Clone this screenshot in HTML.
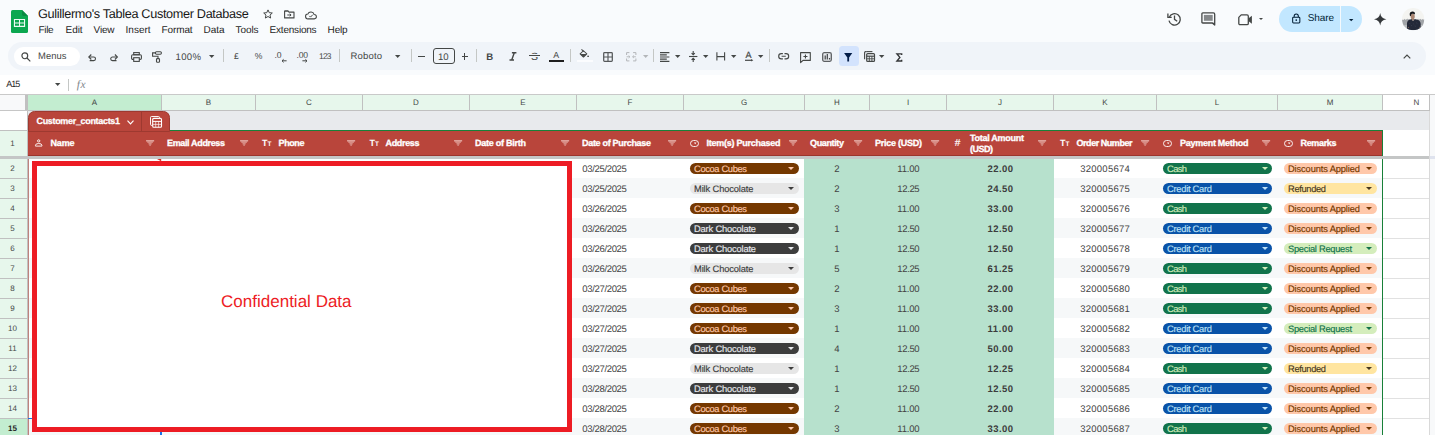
<!DOCTYPE html>
<html><head><meta charset="utf-8"><title>Sheet</title>
<style>
html,body{margin:0;padding:0;}
body{width:1435px;height:435px;overflow:hidden;background:#fff;position:relative;font-family:"Liberation Sans",sans-serif;text-rendering:geometricPrecision;}
.t{position:absolute;white-space:nowrap;}
.b{position:absolute;}
svg{position:absolute;overflow:visible;}
</style></head><body>
<div class="b" style="left:0px;top:0px;width:1435px;height:94px;background:#f9fbfd;"></div>
<svg style="left:11px;top:10px" width="17" height="23" viewBox="0 0 17 23">
<path d="M1.6 0 H11 L17 6 V21.4 Q17 23 15.4 23 H1.6 Q0 23 0 21.4 V1.6 Q0 0 1.6 0Z" fill="#0ca750"/>
<path d="M11 0 L17 6 H12.4 Q11 6 11 4.6Z" fill="#0a8a43"/>
<path d="M2.900 8.900 H14.100 V16.900 H2.900Z M4 10 V12.400 H8 V10Z M9 10 V12.400 H13 V10Z M4 13.400 V15.800 H8 V13.400Z M9 13.400 V15.800 H13 V13.400Z" fill="#fff" fill-rule="evenodd" opacity="0.940"/>
</svg>
<div class="t" style="left:38.00px;top:7px;font-size:12.7px;line-height:14px;color:#171717;letter-spacing:-0.337px;">Gulillermo's Tablea Customer Database</div>
<svg style="left:262.800px;top:9.300px" width="10" height="10" viewBox="0 0 10 10"><path d="M5 0.900L6.250 3.700 9.300 4 7 6.050 7.650 9.050 5 7.500 2.350 9.050 3 6.050 0.700 4 3.750 3.700z" fill="none" stroke="#444746" stroke-width="1" stroke-linejoin="miter"/></svg>
<svg style="left:283.600px;top:10.400px" width="10.600" height="8.600" viewBox="0 0 10.600 8.600"><path d="M0.600 1H4L5 2.100H10V7.900H0.600Z" fill="none" stroke="#444746" stroke-width="1.100" stroke-linejoin="round"/><path d="M0.600 0.600H4.200L5 1.600H0.600Z" fill="#444746"/><path d="M3.300 5H7M5.700 3.700L7.100 5 5.700 6.300" fill="none" stroke="#444746" stroke-width="1"/></svg>
<svg style="left:304.500px;top:10.600px" width="12" height="8.600" viewBox="0 0 12 8.600"><path d="M3.100 7.900A2.400 2.400 0 0 1 2.800 3.100A3.300 3.300 0 0 1 9.100 3.500A2.200 2.200 0 0 1 9.300 7.900Z" fill="none" stroke="#444746" stroke-width="1.050"/><path d="M4.300 4.900L5.500 6.100 7.800 3.700" fill="none" stroke="#444746" stroke-width="1"/></svg>
<div class="t" style="left:38.60px;top:25px;font-size:10px;line-height:11px;color:#1f1f1f;letter-spacing:-0.371px;">File</div>
<div class="t" style="left:65.60px;top:25px;font-size:10px;line-height:11px;color:#1f1f1f;letter-spacing:-0.077px;">Edit</div>
<div class="t" style="left:93.60px;top:25px;font-size:10px;line-height:11px;color:#1f1f1f;letter-spacing:-0.165px;">View</div>
<div class="t" style="left:125.60px;top:25px;font-size:10px;line-height:11px;color:#1f1f1f;letter-spacing:-0.002px;">Insert</div>
<div class="t" style="left:161.60px;top:25px;font-size:10px;line-height:11px;color:#1f1f1f;letter-spacing:-0.133px;">Format</div>
<div class="t" style="left:203.60px;top:25px;font-size:10px;line-height:11px;color:#1f1f1f;letter-spacing:-0.041px;">Data</div>
<div class="t" style="left:235.60px;top:25px;font-size:10px;line-height:11px;color:#1f1f1f;letter-spacing:-0.086px;">Tools</div>
<div class="t" style="left:269.60px;top:25px;font-size:10px;line-height:11px;color:#1f1f1f;letter-spacing:-0.213px;">Extensions</div>
<div class="t" style="left:327.60px;top:25px;font-size:10px;line-height:11px;color:#1f1f1f;letter-spacing:-0.189px;">Help</div>
<svg style="left:1167px;top:12px" width="15" height="14" viewBox="0 0 15 14"><path d="M2.300 5.200A5.700 5.700 0 1 1 2 8.600" fill="none" stroke="#444746" stroke-width="1.300"/><path d="M0.900 1.600V5.400H4.700" fill="none" stroke="#444746" stroke-width="1.300"/><path d="M7.500 3.500V7.400L10.200 9.200" fill="none" stroke="#444746" stroke-width="1.300"/></svg>
<svg style="left:1200.500px;top:12px" width="15" height="14" viewBox="0 0 15 14"><path d="M1.800 0.900H12.400Q13.700 0.900 13.700 2.200V13L11.300 11H1.800Q0.900 11 0.900 10.100V1.800Q0.900 0.900 1.800 0.900Z" fill="none" stroke="#444746" stroke-width="1.300" stroke-linejoin="round"/><path d="M13.700 13L11 10.800H13.700Z" fill="#444746"/><rect x="2.900" y="2.900" width="8.800" height="5.900" fill="#85888a"/></svg>
<svg style="left:1238px;top:13.700px" width="15" height="12" viewBox="0 0 15 12"><path d="M3.200 0.900H9Q10.300 0.900 10.300 2.200V9.400Q10.300 10.700 9 10.700H2.100Q0.800 10.700 0.800 9.400V3.400Z" fill="none" stroke="#444746" stroke-width="1.300" stroke-linejoin="round"/><path d="M10.300 4.600L13.900 1.800V9.800L10.300 7z" fill="#444746"/></svg>
<svg style="left:1258.800px;top:17.900px" width="4" height="2" viewBox="0 0 4 2"><path d="M0 0h4L2 2z" fill="#444746"/></svg>
<div class="b" style="left:1279px;top:6px;width:83.3px;height:26px;background:#c2e7ff;border-radius:13px;"></div>
<div class="b" style="left:1340.2px;top:6px;width:0.9px;height:26px;background:#f4f9fd;"></div>
<svg style="left:1291.600px;top:13px" width="8.500" height="10.800" viewBox="0 0 9 11"><path d="M2.300 4V3A2.200 2.200 0 0 1 6.700 3V4" fill="none" stroke="#001d35" stroke-width="1.100"/><rect x="0.700" y="4.200" width="7.600" height="6.100" rx="0.900" fill="none" stroke="#001d35" stroke-width="1.100"/><circle cx="4.500" cy="7.300" r="0.900" fill="#001d35"/></svg>
<div class="t" style="left:1307.80px;top:13px;font-size:10px;line-height:11px;color:#001d35;letter-spacing:-0.096px;">Share</div>
<svg style="left:1348.800px;top:18.700px" width="4.400" height="2.200" viewBox="0 0 4.400 2.200"><path d="M0 0h4.400L2.200 2.200z" fill="#001d35"/></svg>
<svg style="left:1374.200px;top:13.100px" width="12.400" height="12.600" viewBox="0 0 24 24"><path d="M12 0c.9 7 4.500 10.900 12 12-7.500 1.100-11.100 5-12 12-.9-7-4.500-10.900-12-12 7.500-1.100 11.100-5 12-12z" fill="#35383b"/></svg>
<svg style="left:1402px;top:7.800px" width="22.300" height="22.300" viewBox="0 0 22.300 22.300"><defs><clipPath id="av"><circle cx="11.150" cy="11.150" r="11.150"/></clipPath></defs><g clip-path="url(#av)"><rect width="22.300" height="22.300" fill="#f4f4f1"/><path d="M0 12.200L0.800 11.400 1.600 12 2.500 10.700 3.300 11.900 4.200 10.900 5 11.800 5.800 10.600 6.600 11.600 7.400 11 8.200 12V22.300H0Z" fill="#a1a4a8"/><path d="M14.500 12L15.300 11 16.100 11.700 16.900 10.700 17.700 11.800 18.600 10.800 19.400 11.900 20.300 10.900 21.200 11.700 22.300 11V22.300H14.500Z" fill="#a1a4a8"/><path d="M0 17H6V22.300H0ZM17 17H22.300V22.300H17Z" fill="#b9bcbf"/><path d="M5 22.300V15.200Q5.200 12.200 8.200 11.400L9.600 10.900 11 13.100 12.700 10.900 15.400 11.700Q18.500 12.600 18.700 16V22.300Z" fill="#242939"/><path d="M9.500 10.200H12V11.200L11 13 9.600 11Z" fill="#9c7865"/><ellipse cx="10.700" cy="8.500" rx="2.050" ry="2.800" fill="#aa8672"/><path d="M7.900 7.700Q6.900 3.700 10.200 3.400Q13.500 3.300 12.900 6.400Q11.700 5.500 10.300 5.800Q8.900 6.200 8.800 8.300Z" fill="#16171b"/><path d="M5.600 19.500L6.600 18.800 6.900 20.300ZM17.600 18.700L18.500 19.300 17.400 20.200Z" fill="#9c7865"/><path d="M7.500 15l.5 1.200M14.500 14.500l.6 1.200M9.500 17l.3 1.200M13 17.500l.4 1.200M11.500 15.500l.3 1" stroke="#454b60" stroke-width="0.500"/></g></svg>
<div class="b" style="left:8px;top:42px;width:1418px;height:28px;background:#f0f4f9;border-radius:14px;"></div>
<div class="b" style="left:14px;top:47px;width:66px;height:18.5px;background:#fff;border-radius:9.250px;"></div>
<svg style="left:20.5px;top:52px" width="10" height="10" viewBox="0 0 10 10"><circle cx="3.800" cy="3.800" r="2.900" fill="none" stroke="#444746" stroke-width="1.150"/><path d="M6 6L9.300 9.300" stroke="#444746" stroke-width="1.200"/></svg>
<div class="t" style="left:38.00px;top:50px;font-size:9.4px;line-height:11px;color:#444746;letter-spacing:0.072px;">Menus</div>
<svg style="left:88px;top:53px" width="9" height="9" viewBox="0 0 9 9"><path d="M1.300 4H5.700A1.800 1.800 0 0 1 5.700 7.600H1.700" fill="none" stroke="#444746" stroke-width="1.100"/><path d="M3.300 1.500L0.800 4l2.500 2.500" fill="none" stroke="#444746" stroke-width="1.100"/></svg>
<svg style="left:110px;top:53px" width="9" height="9" viewBox="0 0 9 9"><path d="M6.900 4H2.500A1.800 1.800 0 0 0 2.500 7.600H6.500" fill="none" stroke="#444746" stroke-width="1.100"/><path d="M4.900 1.500L7.400 4 4.900 6.500" fill="none" stroke="#444746" stroke-width="1.100"/></svg>
<svg style="left:131px;top:52px" width="11" height="10" viewBox="0 0 11 10"><rect x="2.700" y="0.600" width="5.600" height="2.200" fill="none" stroke="#444746" stroke-width="1.100"/><rect x="0.600" y="2.800" width="9.800" height="4.600" rx="1.200" fill="none" stroke="#444746" stroke-width="1.100"/><rect x="2.700" y="5.700" width="5.600" height="3.700" fill="#f0f4f9" stroke="#444746" stroke-width="1.100"/></svg>
<svg style="left:152px;top:51px" width="10" height="12" viewBox="0 0 10 12"><rect x="3.400" y="0.700" width="6" height="2.500" rx="1.100" fill="none" stroke="#444746" stroke-width="1.100"/><path d="M3.400 1.900H0.600V5.200H6V7.400" fill="none" stroke="#444746" stroke-width="1.100"/><rect x="4.500" y="7.600" width="3" height="3.700" rx="0.900" fill="none" stroke="#444746" stroke-width="1.100"/></svg>
<div class="t" style="left:175.50px;top:52px;font-size:9.6px;line-height:11px;color:#444746;letter-spacing:0.316px;">100%</div>
<svg style="left:208.8px;top:55.3px" width="5.400" height="3" viewBox="0 0 5.400 3"><path d="M0 0h5.400L2.700 3z" fill="#444746"/></svg>
<div class="b" style="left:223px;top:49px;width:1px;height:13px;background:#c4c7c5;"></div>
<div class="t" style="left:234.11px;top:51px;font-size:8.6px;line-height:10px;color:#444746;">£</div>
<div class="t" style="left:254.78px;top:51px;font-size:8.6px;line-height:10px;color:#444746;">%</div>
<div class="t" style="left:274.41px;top:50px;font-size:8.6px;line-height:10px;color:#444746;">.0</div>
<div class="t" style="left:296.55px;top:50px;font-size:8.6px;line-height:10px;color:#444746;letter-spacing:-0.227px;">.00</div>
<svg style="left:280.5px;top:58.5px" width="6" height="4" viewBox="0 0 6 4"><path d="M5.600 1.800H1M2.600 0.300L1 1.800l1.600 1.500" fill="none" stroke="#444746" stroke-width="1"/></svg>
<svg style="left:302px;top:58.5px" width="6" height="4" viewBox="0 0 6 4"><path d="M0.400 1.800H5M3.400 0.300L5 1.800 3.400 3.300" fill="none" stroke="#444746" stroke-width="1"/></svg>
<div class="t" style="left:319.05px;top:51px;font-size:8.4px;line-height:10px;color:#444746;letter-spacing:-0.757px;">123</div>
<div class="b" style="left:339px;top:49px;width:1px;height:13px;background:#c4c7c5;"></div>
<div class="t" style="left:350.50px;top:51px;font-size:9.5px;line-height:11px;color:#444746;letter-spacing:0.174px;">Roboto</div>
<svg style="left:394.8px;top:55.3px" width="5.400" height="3" viewBox="0 0 5.400 3"><path d="M0 0h5.400L2.700 3z" fill="#444746"/></svg>
<div class="b" style="left:411px;top:49px;width:1px;height:13px;background:#c4c7c5;"></div>
<div class="b" style="left:418.3px;top:56px;width:6.5px;height:1px;background:#444746;"></div>
<div class="b" style="left:432.5px;top:48px;width:22px;height:15.5px;background:transparent;border:1px solid #444746;border-radius:3px;box-sizing:border-box;"></div>
<div class="t" style="left:437.96px;top:52px;font-size:9.6px;line-height:11px;color:#444746;">10</div>
<div class="b" style="left:461.5px;top:56px;width:6.5px;height:1px;background:#444746;"></div>
<div class="b" style="left:464.25px;top:53.25px;width:1px;height:6.5px;background:#444746;"></div>
<div class="b" style="left:476px;top:49px;width:1px;height:13px;background:#c4c7c5;"></div>
<div class="t" style="left:486.23px;top:52px;font-size:9.6px;line-height:11px;color:#444746;font-weight:700;">B</div>
<svg style="left:508.5px;top:52px" width="8" height="9" viewBox="0 0 8 9"><path d="M2.900 0.700H7.400M0.500 8H5M5.300 0.700L2.700 8" fill="none" stroke="#444746" stroke-width="1.400"/></svg>
<div class="t" style="left:531.00px;top:51px;font-size:10.5px;line-height:12px;color:#444746;">S</div>
<div class="b" style="left:528.8px;top:54.4px;width:11px;height:0.6px;background:#f0f4f9;"></div>
<div class="b" style="left:528.8px;top:56px;width:11px;height:0.6px;background:#f0f4f9;"></div>
<div class="b" style="left:528.8px;top:55px;width:11px;height:1px;background:#444746;"></div>
<div class="t" style="left:553.17px;top:50px;font-size:8.8px;line-height:10px;color:#444746;">A</div>
<div class="b" style="left:549px;top:60px;width:15px;height:1.7px;background:#1f1f1f;"></div>
<div class="b" style="left:570px;top:49px;width:1px;height:13px;background:#c4c7c5;"></div>
<svg style="left:579.3px;top:49.2px" width="11" height="10" viewBox="0 0 11 10"><g transform="scale(0.930 0.880)"><path d="M1.200 5.600L4.800 2l3.600 3.600L4.800 9.200z" fill="none" stroke="#444746" stroke-width="1.100" stroke-linejoin="round"/><path d="M1.400 5.700h6.800L4.800 9.100z" fill="#444746"/><path d="M2.700 0.500L5.200 3" stroke="#444746" stroke-width="1.100"/><circle cx="9.800" cy="8.200" r="0.950" fill="#444746"/></g></svg>
<div class="b" style="left:577px;top:60.3px;width:16px;height:1.4px;background:#fbfcfe;"></div>
<svg style="left:603px;top:52px" width="10" height="10" viewBox="0 0 10 10"><rect x="0.700" y="0.700" width="8.600" height="8.600" rx="0.800" fill="none" stroke="#55585a" stroke-width="1.250"/><path d="M5 0.700v8.600M0.700 5h8.600" stroke="#55585a" stroke-width="1.150"/></svg>
<svg style="left:626px;top:52px" width="10.5" height="9.5" viewBox="0 0 10.5 9.5"><path d="M0.600 3V0.600H3.400M7.100 0.600H9.900V3M0.600 6.500V8.900H3.400M7.100 8.900H9.900V6.500" fill="none" stroke="#b3b6b9" stroke-width="1"/><path d="M0.600 4.750H3.800M2.600 3.500L3.900 4.750 2.600 6M9.900 4.750H6.700M7.900 3.500L6.600 4.750 7.900 6" fill="none" stroke="#b3b6b9" stroke-width="0.900"/></svg>
<svg style="left:642.5px;top:55.3px" width="5.400" height="3" viewBox="0 0 5.400 3"><path d="M0 0h5.400L2.700 3z" fill="#b3b6b9"/></svg>
<div class="b" style="left:653px;top:49px;width:1px;height:13px;background:#c4c7c5;"></div>
<svg style="left:660px;top:52px" width="9.6" height="10" viewBox="0 0 9.6 10"><path d="M0 0.600h9.400M0 2.800h6.800M0 5h9.400M0 7.200h6.800M0 9.400h9.400" stroke="#444746" stroke-width="1.150"/></svg>
<svg style="left:674.5px;top:55.3px" width="5.400" height="3" viewBox="0 0 5.400 3"><path d="M0 0h5.400L2.700 3z" fill="#444746"/></svg>
<svg style="left:689px;top:51px" width="8.4" height="11" viewBox="0 0 8.4 11"><path d="M0 5.500h8.400" stroke="#444746" stroke-width="1.100"/><path d="M4.200 0v3.600M2.600 2.200L4.200 3.800l1.600-1.600M4.200 11V7.400M2.600 8.800L4.200 7.200l1.600 1.600" fill="none" stroke="#444746" stroke-width="1.100"/></svg>
<svg style="left:702.6999999999999px;top:55.3px" width="5.400" height="3" viewBox="0 0 5.400 3"><path d="M0 0h5.400L2.700 3z" fill="#444746"/></svg>
<svg style="left:716px;top:52px" width="10" height="9" viewBox="0 0 10 9"><path d="M0.900 0.300v8.300M8.600 0.300v8.300M0.900 4.600h7.700" stroke="#444746" stroke-width="1.100"/></svg>
<svg style="left:730.5px;top:55.3px" width="5.400" height="3" viewBox="0 0 5.400 3"><path d="M0 0h5.400L2.700 3z" fill="#444746"/></svg>
<div class="t" style="left:745.60px;top:50px;font-size:9px;line-height:10px;color:#444746;-webkit-text-stroke:0.200px #444746;">A</div>
<svg style="left:745px;top:58.8px" width="8.5" height="2.6" viewBox="0 0 8.5 2.6"><path d="M0 1.300h7" stroke="#444746" stroke-width="1.200"/><path d="M6.200 0L8.300 1.300 6.200 2.600z" fill="#444746"/></svg>
<svg style="left:758.4px;top:55.3px" width="5.400" height="3" viewBox="0 0 5.400 3"><path d="M0 0h5.400L2.700 3z" fill="#444746"/></svg>
<div class="b" style="left:769px;top:49px;width:1px;height:13px;background:#c4c7c5;"></div>
<svg style="left:777.5px;top:53.3px" width="11.4" height="6.6" viewBox="0 0 11.4 6.6"><path d="M4.900 0.700H3.300a2.600 2.600 0 0 0 0 5.200h1.600M6.500 0.700h1.600a2.600 2.600 0 0 1 0 5.200H6.500M3.600 3.300h4.200" fill="none" stroke="#444746" stroke-width="1.150"/></svg>
<svg style="left:799.5px;top:51.5px" width="11" height="11" viewBox="0 0 11 11"><path d="M0.600 0.600h9.700v7.800H3L0.600 10.600z" fill="none" stroke="#444746" stroke-width="1.100" stroke-linejoin="round"/><path d="M5.450 2.500v4M3.450 4.500h4" stroke="#444746" stroke-width="1.100"/></svg>
<svg style="left:822px;top:52px" width="10" height="10" viewBox="0 0 10 10"><rect x="0.700" y="0.700" width="8.600" height="8.600" rx="1.500" fill="#e6e9ed" stroke="#5c5f62" stroke-width="1.300"/><path d="M3.200 7.500V3.500M5.300 7.500V2.100M7.500 7.500V5.900" stroke="#3f4245" stroke-width="1.200"/></svg>
<div class="b" style="left:839px;top:46px;width:20px;height:20px;background:#d3e3fd;border-radius:3.500px;"></div>
<svg style="left:844.3px;top:52.7px" width="8.4" height="8.7" viewBox="0 0 8.4 8.7"><path d="M0.100 0.100h8.200L5.100 4.500v4H3.300V4.500z" fill="#041e49"/></svg>
<svg style="left:864px;top:51.3px" width="11" height="11" viewBox="0 0 11 11"><path d="M2.200 0.600H1.600Q0.600 0.600 0.600 1.600V8.200" fill="none" stroke="#444746" stroke-width="1.100"/><path d="M2.200 0.600h6.200" stroke="#444746" stroke-width="1.100"/><rect x="2.700" y="2.600" width="7.800" height="7.800" rx="1" fill="none" stroke="#444746" stroke-width="1.200"/><path d="M2.700 5.200h7.800" stroke="#444746" stroke-width="1.200"/><path d="M5.300 5.200v5.200M7.900 5.200v5.200M2.700 7.800h7.800" stroke="#444746" stroke-width="0.900"/></svg>
<svg style="left:878.8px;top:55.3px" width="5.400" height="3" viewBox="0 0 5.400 3"><path d="M0 0h5.400L2.700 3z" fill="#444746"/></svg>
<svg style="left:896.3px;top:52.5px" width="6.4" height="8.8" viewBox="0 0 6.4 8.8"><path d="M5.700 2.100V0.800H0.900L3.900 4.400 0.900 8H5.700V6.700" fill="none" stroke="#333537" stroke-width="1.350"/></svg>
<svg style="left:1403px;top:53.5px" width="8" height="5" viewBox="0 0 8 5"><path d="M0.700 4.300L4 1l3.300 3.300" fill="none" stroke="#444746" stroke-width="1.200"/></svg>
<div class="b" style="left:0px;top:75px;width:1435px;height:19px;background:#fff;"></div>
<div class="t" style="left:6.30px;top:79px;font-size:9px;line-height:10px;color:#1f1f1f;letter-spacing:-1.006px;">A15</div>
<svg style="left:54.599999999999994px;top:83.3px" width="5.400" height="3" viewBox="0 0 5.400 3"><path d="M0 0h5.400L2.700 3z" fill="#444746"/></svg>
<div class="b" style="left:68px;top:79px;width:1px;height:11.5px;background:#c4c7c5;"></div>
<div class="t" style="left:76.80px;top:79px;font-size:11.5px;line-height:12px;color:#80868b;font-style:italic;font-family:'Liberation Serif',serif;letter-spacing:0.400px;">fx</div>
<div class="b" style="left:0px;top:94px;width:1435px;height:1px;background:#c9c9c9;"></div>
<div class="b" style="left:0px;top:95px;width:25px;height:16px;background:#f8f9fa;"></div>
<div class="b" style="left:25px;top:95px;width:3px;height:16px;background:#c0c0c0;"></div>
<div class="b" style="left:0px;top:110px;width:28px;height:1px;background:#c6c6c6;"></div>
<div class="b" style="left:28px;top:95px;width:133px;height:15px;background:#c3edd0;"></div>
<div class="b" style="left:161px;top:95px;width:1px;height:16px;background:#c0c0c0;"></div>
<div class="t" style="left:91.83px;top:98px;font-size:8px;line-height:9px;color:#444746;">A</div>
<div class="b" style="left:162px;top:95px;width:93px;height:15px;background:#e7f7ec;"></div>
<div class="b" style="left:255px;top:95px;width:1px;height:16px;background:#c0c0c0;"></div>
<div class="t" style="left:205.83px;top:98px;font-size:8px;line-height:9px;color:#444746;">B</div>
<div class="b" style="left:256px;top:95px;width:106px;height:15px;background:#e7f7ec;"></div>
<div class="b" style="left:362px;top:95px;width:1px;height:16px;background:#c0c0c0;"></div>
<div class="t" style="left:306.11px;top:98px;font-size:8px;line-height:9px;color:#444746;">C</div>
<div class="b" style="left:363px;top:95px;width:106px;height:15px;background:#e7f7ec;"></div>
<div class="b" style="left:469px;top:95px;width:1px;height:16px;background:#c0c0c0;"></div>
<div class="t" style="left:413.11px;top:98px;font-size:8px;line-height:9px;color:#444746;">D</div>
<div class="b" style="left:470px;top:95px;width:106px;height:15px;background:#e7f7ec;"></div>
<div class="b" style="left:576px;top:95px;width:1px;height:16px;background:#c0c0c0;"></div>
<div class="t" style="left:520.33px;top:98px;font-size:8px;line-height:9px;color:#444746;">E</div>
<div class="b" style="left:577px;top:95px;width:106px;height:15px;background:#e7f7ec;"></div>
<div class="b" style="left:683px;top:95px;width:1px;height:16px;background:#c0c0c0;"></div>
<div class="t" style="left:627.56px;top:98px;font-size:8px;line-height:9px;color:#444746;">F</div>
<div class="b" style="left:684px;top:95px;width:120px;height:15px;background:#e7f7ec;"></div>
<div class="b" style="left:804px;top:95px;width:1px;height:16px;background:#c0c0c0;"></div>
<div class="t" style="left:740.89px;top:98px;font-size:8px;line-height:9px;color:#444746;">G</div>
<div class="b" style="left:805px;top:95px;width:64px;height:15px;background:#e7f7ec;"></div>
<div class="b" style="left:869px;top:95px;width:1px;height:16px;background:#c0c0c0;"></div>
<div class="t" style="left:834.11px;top:98px;font-size:8px;line-height:9px;color:#444746;">H</div>
<div class="b" style="left:870px;top:95px;width:76px;height:15px;background:#e7f7ec;"></div>
<div class="b" style="left:946px;top:95px;width:1px;height:16px;background:#c0c0c0;"></div>
<div class="t" style="left:906.89px;top:98px;font-size:8px;line-height:9px;color:#444746;">I</div>
<div class="b" style="left:947px;top:95px;width:106px;height:15px;background:#e7f7ec;"></div>
<div class="b" style="left:1053px;top:95px;width:1px;height:16px;background:#c0c0c0;"></div>
<div class="t" style="left:998.00px;top:98px;font-size:8px;line-height:9px;color:#444746;">J</div>
<div class="b" style="left:1054px;top:95px;width:102px;height:15px;background:#e7f7ec;"></div>
<div class="b" style="left:1156px;top:95px;width:1px;height:16px;background:#c0c0c0;"></div>
<div class="t" style="left:1102.33px;top:98px;font-size:8px;line-height:9px;color:#444746;">K</div>
<div class="b" style="left:1157px;top:95px;width:120px;height:15px;background:#e7f7ec;"></div>
<div class="b" style="left:1277px;top:95px;width:1px;height:16px;background:#c0c0c0;"></div>
<div class="t" style="left:1214.78px;top:98px;font-size:8px;line-height:9px;color:#444746;">L</div>
<div class="b" style="left:1278px;top:95px;width:104px;height:15px;background:#e7f7ec;"></div>
<div class="b" style="left:1382px;top:95px;width:1px;height:16px;background:#c0c0c0;"></div>
<div class="t" style="left:1326.67px;top:98px;font-size:8px;line-height:9px;color:#444746;">M</div>
<div class="b" style="left:1383px;top:95px;width:46px;height:15px;background:#fff;"></div>
<div class="b" style="left:1429px;top:95px;width:1px;height:16px;background:#c0c0c0;"></div>
<div class="t" style="left:1413.61px;top:98px;font-size:8px;line-height:9px;color:#444746;">N</div>
<div class="b" style="left:28px;top:110px;width:1402px;height:1px;background:#c0c0c0;"></div>
<div class="b" style="left:1430px;top:95px;width:5px;height:340px;background:#f8f9fa;"></div>
<div class="b" style="left:0px;top:111px;width:27px;height:19px;background:#fff;"></div>
<div class="b" style="left:0px;top:130px;width:27px;height:26px;background:#e7f7ec;"></div>
<div class="b" style="left:27px;top:111px;width:1px;height:324px;background:#c0c0c0;"></div>
<div class="b" style="left:0px;top:130px;width:27px;height:1px;background:#c0c0c0;"></div>
<div class="t" style="left:10.28px;top:139px;font-size:8px;line-height:9px;color:#444746;">1</div>
<div class="b" style="left:0px;top:159px;width:27px;height:19px;background:#e7f7ec;"></div>
<div class="b" style="left:0px;top:178px;width:27px;height:1px;background:#c0c0c0;"></div>
<div class="t" style="left:10.28px;top:164px;font-size:8px;line-height:9px;color:#444746;">2</div>
<div class="b" style="left:0px;top:179px;width:27px;height:19px;background:#e7f7ec;"></div>
<div class="b" style="left:0px;top:198px;width:27px;height:1px;background:#c0c0c0;"></div>
<div class="t" style="left:10.28px;top:184px;font-size:8px;line-height:9px;color:#444746;">3</div>
<div class="b" style="left:0px;top:199px;width:27px;height:19px;background:#e7f7ec;"></div>
<div class="b" style="left:0px;top:218px;width:27px;height:1px;background:#c0c0c0;"></div>
<div class="t" style="left:10.28px;top:204px;font-size:8px;line-height:9px;color:#444746;">4</div>
<div class="b" style="left:0px;top:219px;width:27px;height:19px;background:#e7f7ec;"></div>
<div class="b" style="left:0px;top:238px;width:27px;height:1px;background:#c0c0c0;"></div>
<div class="t" style="left:10.28px;top:224px;font-size:8px;line-height:9px;color:#444746;">5</div>
<div class="b" style="left:0px;top:239px;width:27px;height:19px;background:#e7f7ec;"></div>
<div class="b" style="left:0px;top:258px;width:27px;height:1px;background:#c0c0c0;"></div>
<div class="t" style="left:10.28px;top:244px;font-size:8px;line-height:9px;color:#444746;">6</div>
<div class="b" style="left:0px;top:259px;width:27px;height:19px;background:#e7f7ec;"></div>
<div class="b" style="left:0px;top:278px;width:27px;height:1px;background:#c0c0c0;"></div>
<div class="t" style="left:10.28px;top:264px;font-size:8px;line-height:9px;color:#444746;">7</div>
<div class="b" style="left:0px;top:279px;width:27px;height:19px;background:#e7f7ec;"></div>
<div class="b" style="left:0px;top:298px;width:27px;height:1px;background:#c0c0c0;"></div>
<div class="t" style="left:10.28px;top:284px;font-size:8px;line-height:9px;color:#444746;">8</div>
<div class="b" style="left:0px;top:299px;width:27px;height:19px;background:#e7f7ec;"></div>
<div class="b" style="left:0px;top:318px;width:27px;height:1px;background:#c0c0c0;"></div>
<div class="t" style="left:10.28px;top:304px;font-size:8px;line-height:9px;color:#444746;">9</div>
<div class="b" style="left:0px;top:319px;width:27px;height:19px;background:#e7f7ec;"></div>
<div class="b" style="left:0px;top:338px;width:27px;height:1px;background:#c0c0c0;"></div>
<div class="t" style="left:8.05px;top:324px;font-size:8px;line-height:9px;color:#444746;">10</div>
<div class="b" style="left:0px;top:339px;width:27px;height:19px;background:#e7f7ec;"></div>
<div class="b" style="left:0px;top:358px;width:27px;height:1px;background:#c0c0c0;"></div>
<div class="t" style="left:8.35px;top:344px;font-size:8px;line-height:9px;color:#444746;">11</div>
<div class="b" style="left:0px;top:359px;width:27px;height:19px;background:#e7f7ec;"></div>
<div class="b" style="left:0px;top:378px;width:27px;height:1px;background:#c0c0c0;"></div>
<div class="t" style="left:8.05px;top:364px;font-size:8px;line-height:9px;color:#444746;">12</div>
<div class="b" style="left:0px;top:379px;width:27px;height:19px;background:#e7f7ec;"></div>
<div class="b" style="left:0px;top:398px;width:27px;height:1px;background:#c0c0c0;"></div>
<div class="t" style="left:8.05px;top:384px;font-size:8px;line-height:9px;color:#444746;">13</div>
<div class="b" style="left:0px;top:399px;width:27px;height:19px;background:#e7f7ec;"></div>
<div class="b" style="left:0px;top:418px;width:27px;height:1px;background:#c0c0c0;"></div>
<div class="t" style="left:8.05px;top:404px;font-size:8px;line-height:9px;color:#444746;">14</div>
<div class="b" style="left:0px;top:419px;width:27px;height:19px;background:#c3edd0;"></div>
<div class="b" style="left:0px;top:438px;width:27px;height:1px;background:#c0c0c0;"></div>
<div class="t" style="left:8.05px;top:424px;font-size:8px;line-height:9px;color:#1f1f1f;font-weight:700;">15</div>
<div class="b" style="left:28px;top:111px;width:1402px;height:19px;background:#e8eaed;"></div>
<div class="b" style="left:170px;top:130px;width:1213px;height:1px;background:#188038;"></div>
<div class="b" style="left:28px;top:131px;width:1354px;height:24px;background:#b9453b;"></div>
<div class="b" style="left:28px;top:155px;width:1354px;height:1px;background:#9c342c;"></div>
<div class="b" style="left:1382px;top:130px;width:1px;height:305px;background:#188038;"></div>
<div class="b" style="left:1383px;top:131px;width:47px;height:25px;background:#fff;"></div>
<div class="b" style="left:28px;top:111px;width:142px;height:21px;background:#b9453b;border-radius:6.500px 6.500px 0 0;border:1px solid #9e3930;box-sizing:border-box;"></div>
<div class="t" style="left:36.50px;top:116px;font-size:9px;line-height:10px;color:#fff;font-weight:700;letter-spacing:-0.325px;-webkit-text-stroke:0.250px #fff;">Customer_contacts1</div>
<svg style="left:127px;top:119.500px" width="7" height="5" viewBox="0 0 7 5"><path d="M0.500 0.700L3.500 3.800 6.500 0.700" fill="none" stroke="#fff" stroke-width="1.150"/></svg>
<div class="b" style="left:141px;top:112px;width:1px;height:19px;background:#9e3930;"></div>
<svg style="left:149.500px;top:115.500px" width="12" height="12" viewBox="0 0 12 12"><path d="M2.500 9.400H1.500Q0.500 9.400 0.500 8.400V1.500Q0.500 0.500 1.500 0.500H8.500Q9.500 0.500 9.500 1.500V2.200" fill="none" stroke="#fff" stroke-width="0.950"/><rect x="2.700" y="2.400" width="8.800" height="8.900" rx="1" fill="none" stroke="#fff" stroke-width="1.100"/><path d="M2.700 5.400h8.800" stroke="#fff" stroke-width="1"/><path d="M5.700 5.400v5.900M8.600 5.400v5.900M2.700 8.400h8.800" stroke="#fff" stroke-width="0.650"/></svg>
<div class="b" style="left:0px;top:156px;width:1430px;height:3px;background:#c4c6c6;"></div>
<div class="b" style="left:1430px;top:156px;width:5px;height:3px;background:#dfe3ee;"></div>
<svg style="left:35.3px;top:139.300px" width="7.400" height="8" viewBox="0 0 7.400 8"><circle cx="3.700" cy="1.900" r="1.150" fill="none" stroke="#fff" stroke-width="0.900"/><path d="M0.500 7.100V6.300Q0.500 4.500 3.700 4.500T6.900 6.300V7.100Z" fill="none" stroke="#fff" stroke-width="0.900"/></svg>
<div class="t" style="left:50.50px;top:138px;font-size:9px;line-height:10px;color:#fff;font-weight:700;letter-spacing:-0.171px;-webkit-text-stroke:0.300px #fff;">Name</div>
<svg style="left:146.2px;top:140.100px" width="8.200" height="6" viewBox="0 0 8.200 6"><path d="M0 0H8.200V1.600H6.900V3.100H5.700V4.500H4.800V6H3.400V4.500H2.500V3.100H1.300V1.600H0Z" fill="#d68a82"/><path d="M0.200 0.200H8V1.300H0.200Z" fill="#e2a6a0"/></svg>
<div class="t" style="left:167.00px;top:138px;font-size:9px;line-height:10px;color:#fff;font-weight:700;letter-spacing:-0.349px;-webkit-text-stroke:0.300px #fff;">Email Address</div>
<svg style="left:240.2px;top:140.100px" width="8.200" height="6" viewBox="0 0 8.200 6"><path d="M0 0H8.200V1.600H6.900V3.100H5.700V4.500H4.800V6H3.400V4.500H2.500V3.100H1.300V1.600H0Z" fill="#d68a82"/><path d="M0.200 0.200H8V1.300H0.200Z" fill="#e2a6a0"/></svg>
<div class="t" style="left:262.00px;top:138px;font-size:9px;line-height:10px;color:#fff;font-weight:700;">T</div>
<div class="t" style="left:267.50px;top:141px;font-size:6.4px;line-height:7px;color:#fff;font-weight:700;">T</div>
<div class="t" style="left:278.50px;top:138px;font-size:9px;line-height:10px;color:#fff;font-weight:700;letter-spacing:-0.375px;-webkit-text-stroke:0.300px #fff;">Phone</div>
<svg style="left:347.2px;top:140.100px" width="8.200" height="6" viewBox="0 0 8.200 6"><path d="M0 0H8.200V1.600H6.900V3.100H5.700V4.500H4.800V6H3.400V4.500H2.500V3.100H1.300V1.600H0Z" fill="#d68a82"/><path d="M0.200 0.200H8V1.300H0.200Z" fill="#e2a6a0"/></svg>
<div class="t" style="left:369.50px;top:138px;font-size:9px;line-height:10px;color:#fff;font-weight:700;">T</div>
<div class="t" style="left:375.00px;top:141px;font-size:6.4px;line-height:7px;color:#fff;font-weight:700;">T</div>
<div class="t" style="left:385.50px;top:138px;font-size:9px;line-height:10px;color:#fff;font-weight:700;letter-spacing:-0.335px;-webkit-text-stroke:0.300px #fff;">Address</div>
<svg style="left:454.2px;top:140.100px" width="8.200" height="6" viewBox="0 0 8.200 6"><path d="M0 0H8.200V1.600H6.900V3.100H5.700V4.500H4.800V6H3.400V4.500H2.500V3.100H1.300V1.600H0Z" fill="#d68a82"/><path d="M0.200 0.200H8V1.300H0.200Z" fill="#e2a6a0"/></svg>
<div class="t" style="left:475.00px;top:138px;font-size:9px;line-height:10px;color:#fff;font-weight:700;letter-spacing:-0.250px;-webkit-text-stroke:0.300px #fff;">Date of Birth</div>
<svg style="left:561.2px;top:140.100px" width="8.200" height="6" viewBox="0 0 8.200 6"><path d="M0 0H8.200V1.600H6.900V3.100H5.700V4.500H4.800V6H3.400V4.500H2.500V3.100H1.300V1.600H0Z" fill="#d68a82"/><path d="M0.200 0.200H8V1.300H0.200Z" fill="#e2a6a0"/></svg>
<div class="t" style="left:582.00px;top:138px;font-size:9px;line-height:10px;color:#fff;font-weight:700;letter-spacing:-0.301px;-webkit-text-stroke:0.300px #fff;">Date of Purchase</div>
<svg style="left:668.2px;top:140.100px" width="8.200" height="6" viewBox="0 0 8.200 6"><path d="M0 0H8.200V1.600H6.900V3.100H5.700V4.500H4.800V6H3.400V4.500H2.500V3.100H1.300V1.600H0Z" fill="#d68a82"/><path d="M0.200 0.200H8V1.300H0.200Z" fill="#e2a6a0"/></svg>
<svg style="left:690px;top:139.500px" width="9" height="7" viewBox="0 0 9 7"><rect x="0.500" y="0.500" width="8" height="6" rx="3" fill="none" stroke="#fff" stroke-width="0.900"/><path d="M4 2.600h2.400L5.200 4.200z" fill="#fff"/></svg>
<div class="t" style="left:706.50px;top:138px;font-size:9px;line-height:10px;color:#fff;font-weight:700;letter-spacing:-0.251px;-webkit-text-stroke:0.300px #fff;">Item(s) Purchased</div>
<svg style="left:789.2px;top:140.100px" width="8.200" height="6" viewBox="0 0 8.200 6"><path d="M0 0H8.200V1.600H6.900V3.100H5.700V4.500H4.800V6H3.400V4.500H2.500V3.100H1.300V1.600H0Z" fill="#d68a82"/><path d="M0.200 0.200H8V1.300H0.200Z" fill="#e2a6a0"/></svg>
<div class="t" style="left:810.00px;top:138px;font-size:9px;line-height:10px;color:#fff;font-weight:700;letter-spacing:-0.357px;-webkit-text-stroke:0.300px #fff;">Quantity</div>
<svg style="left:854.2px;top:140.100px" width="8.200" height="6" viewBox="0 0 8.200 6"><path d="M0 0H8.200V1.600H6.900V3.100H5.700V4.500H4.800V6H3.400V4.500H2.500V3.100H1.300V1.600H0Z" fill="#d68a82"/><path d="M0.200 0.200H8V1.300H0.200Z" fill="#e2a6a0"/></svg>
<div class="t" style="left:875.00px;top:138px;font-size:9px;line-height:10px;color:#fff;font-weight:700;letter-spacing:-0.251px;-webkit-text-stroke:0.300px #fff;">Price (USD)</div>
<svg style="left:931.2px;top:140.100px" width="8.200" height="6" viewBox="0 0 8.200 6"><path d="M0 0H8.200V1.600H6.900V3.100H5.700V4.500H4.800V6H3.400V4.500H2.500V3.100H1.300V1.600H0Z" fill="#d68a82"/><path d="M0.200 0.200H8V1.300H0.200Z" fill="#e2a6a0"/></svg>
<div class="t" style="left:954.72px;top:138px;font-size:10px;line-height:11px;color:#fff;-webkit-text-stroke:0.200px #fff;">#</div>
<div class="t" style="left:970.00px;top:133px;font-size:9px;line-height:10px;color:#fff;font-weight:700;letter-spacing:-0.271px;-webkit-text-stroke:0.300px #fff;">Total Amount</div>
<div class="t" style="left:970.00px;top:144px;font-size:9px;line-height:10px;color:#fff;font-weight:700;letter-spacing:-0.499px;-webkit-text-stroke:0.300px #fff;">(USD)</div>
<svg style="left:1038.2px;top:140.100px" width="8.200" height="6" viewBox="0 0 8.200 6"><path d="M0 0H8.200V1.600H6.900V3.100H5.700V4.500H4.800V6H3.400V4.500H2.500V3.100H1.300V1.600H0Z" fill="#d68a82"/><path d="M0.200 0.200H8V1.300H0.200Z" fill="#e2a6a0"/></svg>
<div class="t" style="left:1060.00px;top:138px;font-size:9px;line-height:10px;color:#fff;font-weight:700;">T</div>
<div class="t" style="left:1065.50px;top:141px;font-size:6.4px;line-height:7px;color:#fff;font-weight:700;">T</div>
<div class="t" style="left:1076.50px;top:138px;font-size:9px;line-height:10px;color:#fff;font-weight:700;letter-spacing:-0.456px;-webkit-text-stroke:0.300px #fff;">Order Number</div>
<svg style="left:1141.2px;top:140.100px" width="8.200" height="6" viewBox="0 0 8.200 6"><path d="M0 0H8.200V1.600H6.900V3.100H5.700V4.500H4.800V6H3.400V4.500H2.500V3.100H1.300V1.600H0Z" fill="#d68a82"/><path d="M0.200 0.200H8V1.300H0.200Z" fill="#e2a6a0"/></svg>
<svg style="left:1163px;top:139.500px" width="9" height="7" viewBox="0 0 9 7"><rect x="0.500" y="0.500" width="8" height="6" rx="3" fill="none" stroke="#fff" stroke-width="0.900"/><path d="M4 2.600h2.400L5.200 4.200z" fill="#fff"/></svg>
<div class="t" style="left:1180.00px;top:138px;font-size:9px;line-height:10px;color:#fff;font-weight:700;letter-spacing:-0.270px;-webkit-text-stroke:0.300px #fff;">Payment Method</div>
<svg style="left:1262.2px;top:140.100px" width="8.200" height="6" viewBox="0 0 8.200 6"><path d="M0 0H8.200V1.600H6.900V3.100H5.700V4.500H4.800V6H3.400V4.500H2.500V3.100H1.300V1.600H0Z" fill="#d68a82"/><path d="M0.200 0.200H8V1.300H0.200Z" fill="#e2a6a0"/></svg>
<svg style="left:1284px;top:139.500px" width="9" height="7" viewBox="0 0 9 7"><rect x="0.500" y="0.500" width="8" height="6" rx="3" fill="none" stroke="#fff" stroke-width="0.900"/><path d="M4 2.600h2.400L5.200 4.200z" fill="#fff"/></svg>
<div class="t" style="left:1300.50px;top:138px;font-size:9px;line-height:10px;color:#fff;font-weight:700;letter-spacing:-0.337px;-webkit-text-stroke:0.300px #fff;">Remarks</div>
<svg style="left:1367.2px;top:140.100px" width="8.200" height="6" viewBox="0 0 8.200 6"><path d="M0 0H8.200V1.600H6.900V3.100H5.700V4.500H4.800V6H3.400V4.500H2.500V3.100H1.300V1.600H0Z" fill="#d68a82"/><path d="M0.200 0.200H8V1.300H0.200Z" fill="#e2a6a0"/></svg>
<div class="b" style="left:28px;top:159px;width:1354px;height:19px;background:#fff;"></div>
<div class="b" style="left:804px;top:159px;width:250px;height:19px;background:#b7e1cd;"></div>
<div class="b" style="left:1383px;top:178px;width:47px;height:1px;background:#e1e1e1;"></div>
<div class="t" style="left:582.30px;top:164px;font-size:9.5px;line-height:11px;color:#434343;letter-spacing:-0.338px;">03/25/2025</div>
<div class="b" style="left:690px;top:163px;width:108.6px;height:11px;background:#753800;border-radius:5.500px;"></div>
<div class="t" style="left:694.00px;top:164px;font-size:9.3px;line-height:10px;color:#ffc8aa;letter-spacing:-0.335px;-webkit-text-stroke:0.150px #ffc8aa;">Cocoa Cubes</div>
<svg style="left:788.3px;top:167.0px" width="6" height="3" viewBox="0 0 6 3"><path d="M0 0h6L3 3z" fill="#ffc8aa"/></svg>
<div class="t" style="left:834.36px;top:164px;font-size:9.5px;line-height:11px;color:#434343;">2</div>
<div class="t" style="left:897.35px;top:164px;font-size:9.5px;line-height:11px;color:#434343;letter-spacing:-0.191px;">11.00</div>
<div class="t" style="left:987.55px;top:164px;font-size:9.5px;line-height:11px;color:#3c3c3c;font-weight:700;letter-spacing:0.432px;">22.00</div>
<div class="t" style="left:1080.25px;top:164px;font-size:9.5px;line-height:11px;color:#434343;letter-spacing:0.244px;">320005674</div>
<div class="b" style="left:1163px;top:163px;width:108.6px;height:11px;background:#11734b;border-radius:5.500px;"></div>
<div class="t" style="left:1167.00px;top:164px;font-size:9.3px;line-height:10px;color:#d4edbc;letter-spacing:-0.570px;-webkit-text-stroke:0.150px #d4edbc;">Cash</div>
<svg style="left:1261.5px;top:167.0px" width="6" height="3" viewBox="0 0 6 3"><path d="M0 0h6L3 3z" fill="#d4edbc"/></svg>
<div class="b" style="left:1284px;top:163px;width:93px;height:11px;background:#ffc8aa;border-radius:5.500px;"></div>
<div class="t" style="left:1288.00px;top:164px;font-size:9.3px;line-height:10px;color:#753800;letter-spacing:-0.120px;-webkit-text-stroke:0.150px #753800;">Discounts Applied</div>
<svg style="left:1366px;top:167.0px" width="6" height="3" viewBox="0 0 6 3"><path d="M0 0h6L3 3z" fill="#753800"/></svg>
<div class="b" style="left:28px;top:178px;width:1354px;height:20px;background:#f6f8f9;"></div>
<div class="b" style="left:804px;top:178px;width:250px;height:20px;background:#b7e1cd;"></div>
<div class="b" style="left:1383px;top:198px;width:47px;height:1px;background:#e1e1e1;"></div>
<div class="t" style="left:582.30px;top:184px;font-size:9.5px;line-height:11px;color:#434343;letter-spacing:-0.338px;">03/25/2025</div>
<div class="b" style="left:690px;top:183px;width:108.6px;height:11px;background:#e6e6e6;border-radius:5.500px;"></div>
<div class="t" style="left:694.00px;top:184px;font-size:9.3px;line-height:10px;color:#3d3d3d;letter-spacing:-0.114px;-webkit-text-stroke:0.150px #3d3d3d;">Milk Chocolate</div>
<svg style="left:788.3px;top:187.0px" width="6" height="3" viewBox="0 0 6 3"><path d="M0 0h6L3 3z" fill="#3d3d3d"/></svg>
<div class="t" style="left:834.36px;top:184px;font-size:9.5px;line-height:11px;color:#434343;">2</div>
<div class="t" style="left:897.35px;top:184px;font-size:9.5px;line-height:11px;color:#434343;letter-spacing:-0.368px;">12.25</div>
<div class="t" style="left:987.55px;top:184px;font-size:9.5px;line-height:11px;color:#3c3c3c;font-weight:700;letter-spacing:0.432px;">24.50</div>
<div class="t" style="left:1080.25px;top:184px;font-size:9.5px;line-height:11px;color:#434343;letter-spacing:0.244px;">320005675</div>
<div class="b" style="left:1163px;top:183px;width:108.6px;height:11px;background:#0a53a8;border-radius:5.500px;"></div>
<div class="t" style="left:1167.00px;top:184px;font-size:9.3px;line-height:10px;color:#bfe1f6;letter-spacing:-0.255px;-webkit-text-stroke:0.150px #bfe1f6;">Credit Card</div>
<svg style="left:1261.5px;top:187.0px" width="6" height="3" viewBox="0 0 6 3"><path d="M0 0h6L3 3z" fill="#bfe1f6"/></svg>
<div class="b" style="left:1284px;top:183px;width:93px;height:11px;background:#ffe5a0;border-radius:5.500px;"></div>
<div class="t" style="left:1288.00px;top:184px;font-size:9.3px;line-height:10px;color:#473821;letter-spacing:-0.333px;-webkit-text-stroke:0.150px #473821;">Refunded</div>
<svg style="left:1366px;top:187.0px" width="6" height="3" viewBox="0 0 6 3"><path d="M0 0h6L3 3z" fill="#473821"/></svg>
<div class="b" style="left:28px;top:198px;width:1354px;height:20px;background:#fff;"></div>
<div class="b" style="left:804px;top:198px;width:250px;height:20px;background:#b7e1cd;"></div>
<div class="b" style="left:1383px;top:218px;width:47px;height:1px;background:#e1e1e1;"></div>
<div class="t" style="left:582.30px;top:204px;font-size:9.5px;line-height:11px;color:#434343;letter-spacing:-0.338px;">03/26/2025</div>
<div class="b" style="left:690px;top:203px;width:108.6px;height:11px;background:#753800;border-radius:5.500px;"></div>
<div class="t" style="left:694.00px;top:204px;font-size:9.3px;line-height:10px;color:#ffc8aa;letter-spacing:-0.335px;-webkit-text-stroke:0.150px #ffc8aa;">Cocoa Cubes</div>
<svg style="left:788.3px;top:207.0px" width="6" height="3" viewBox="0 0 6 3"><path d="M0 0h6L3 3z" fill="#ffc8aa"/></svg>
<div class="t" style="left:834.36px;top:204px;font-size:9.5px;line-height:11px;color:#434343;">3</div>
<div class="t" style="left:897.35px;top:204px;font-size:9.5px;line-height:11px;color:#434343;letter-spacing:-0.191px;">11.00</div>
<div class="t" style="left:987.55px;top:204px;font-size:9.5px;line-height:11px;color:#3c3c3c;font-weight:700;letter-spacing:0.432px;">33.00</div>
<div class="t" style="left:1080.25px;top:204px;font-size:9.5px;line-height:11px;color:#434343;letter-spacing:0.244px;">320005676</div>
<div class="b" style="left:1163px;top:203px;width:108.6px;height:11px;background:#11734b;border-radius:5.500px;"></div>
<div class="t" style="left:1167.00px;top:204px;font-size:9.3px;line-height:10px;color:#d4edbc;letter-spacing:-0.570px;-webkit-text-stroke:0.150px #d4edbc;">Cash</div>
<svg style="left:1261.5px;top:207.0px" width="6" height="3" viewBox="0 0 6 3"><path d="M0 0h6L3 3z" fill="#d4edbc"/></svg>
<div class="b" style="left:1284px;top:203px;width:93px;height:11px;background:#ffc8aa;border-radius:5.500px;"></div>
<div class="t" style="left:1288.00px;top:204px;font-size:9.3px;line-height:10px;color:#753800;letter-spacing:-0.120px;-webkit-text-stroke:0.150px #753800;">Discounts Applied</div>
<svg style="left:1366px;top:207.0px" width="6" height="3" viewBox="0 0 6 3"><path d="M0 0h6L3 3z" fill="#753800"/></svg>
<div class="b" style="left:28px;top:218px;width:1354px;height:20px;background:#f6f8f9;"></div>
<div class="b" style="left:804px;top:218px;width:250px;height:20px;background:#b7e1cd;"></div>
<div class="b" style="left:1383px;top:238px;width:47px;height:1px;background:#e1e1e1;"></div>
<div class="t" style="left:582.30px;top:224px;font-size:9.5px;line-height:11px;color:#434343;letter-spacing:-0.338px;">03/26/2025</div>
<div class="b" style="left:690px;top:223px;width:108.6px;height:11px;background:#3d3d3d;border-radius:5.500px;"></div>
<div class="t" style="left:694.00px;top:224px;font-size:9.3px;line-height:10px;color:#e8eaed;letter-spacing:-0.161px;-webkit-text-stroke:0.150px #e8eaed;">Dark Chocolate</div>
<svg style="left:788.3px;top:227.0px" width="6" height="3" viewBox="0 0 6 3"><path d="M0 0h6L3 3z" fill="#e8eaed"/></svg>
<div class="t" style="left:834.36px;top:224px;font-size:9.5px;line-height:11px;color:#434343;">1</div>
<div class="t" style="left:897.35px;top:224px;font-size:9.5px;line-height:11px;color:#434343;letter-spacing:-0.368px;">12.50</div>
<div class="t" style="left:987.55px;top:224px;font-size:9.5px;line-height:11px;color:#3c3c3c;font-weight:700;letter-spacing:0.432px;">12.50</div>
<div class="t" style="left:1080.25px;top:224px;font-size:9.5px;line-height:11px;color:#434343;letter-spacing:0.244px;">320005677</div>
<div class="b" style="left:1163px;top:223px;width:108.6px;height:11px;background:#0a53a8;border-radius:5.500px;"></div>
<div class="t" style="left:1167.00px;top:224px;font-size:9.3px;line-height:10px;color:#bfe1f6;letter-spacing:-0.255px;-webkit-text-stroke:0.150px #bfe1f6;">Credit Card</div>
<svg style="left:1261.5px;top:227.0px" width="6" height="3" viewBox="0 0 6 3"><path d="M0 0h6L3 3z" fill="#bfe1f6"/></svg>
<div class="b" style="left:1284px;top:223px;width:93px;height:11px;background:#ffc8aa;border-radius:5.500px;"></div>
<div class="t" style="left:1288.00px;top:224px;font-size:9.3px;line-height:10px;color:#753800;letter-spacing:-0.120px;-webkit-text-stroke:0.150px #753800;">Discounts Applied</div>
<svg style="left:1366px;top:227.0px" width="6" height="3" viewBox="0 0 6 3"><path d="M0 0h6L3 3z" fill="#753800"/></svg>
<div class="b" style="left:28px;top:238px;width:1354px;height:20px;background:#fff;"></div>
<div class="b" style="left:804px;top:238px;width:250px;height:20px;background:#b7e1cd;"></div>
<div class="b" style="left:1383px;top:258px;width:47px;height:1px;background:#e1e1e1;"></div>
<div class="t" style="left:582.30px;top:244px;font-size:9.5px;line-height:11px;color:#434343;letter-spacing:-0.338px;">03/26/2025</div>
<div class="b" style="left:690px;top:243px;width:108.6px;height:11px;background:#3d3d3d;border-radius:5.500px;"></div>
<div class="t" style="left:694.00px;top:244px;font-size:9.3px;line-height:10px;color:#e8eaed;letter-spacing:-0.161px;-webkit-text-stroke:0.150px #e8eaed;">Dark Chocolate</div>
<svg style="left:788.3px;top:247.0px" width="6" height="3" viewBox="0 0 6 3"><path d="M0 0h6L3 3z" fill="#e8eaed"/></svg>
<div class="t" style="left:834.36px;top:244px;font-size:9.5px;line-height:11px;color:#434343;">1</div>
<div class="t" style="left:897.35px;top:244px;font-size:9.5px;line-height:11px;color:#434343;letter-spacing:-0.368px;">12.50</div>
<div class="t" style="left:987.55px;top:244px;font-size:9.5px;line-height:11px;color:#3c3c3c;font-weight:700;letter-spacing:0.432px;">12.50</div>
<div class="t" style="left:1080.25px;top:244px;font-size:9.5px;line-height:11px;color:#434343;letter-spacing:0.244px;">320005678</div>
<div class="b" style="left:1163px;top:243px;width:108.6px;height:11px;background:#0a53a8;border-radius:5.500px;"></div>
<div class="t" style="left:1167.00px;top:244px;font-size:9.3px;line-height:10px;color:#bfe1f6;letter-spacing:-0.255px;-webkit-text-stroke:0.150px #bfe1f6;">Credit Card</div>
<svg style="left:1261.5px;top:247.0px" width="6" height="3" viewBox="0 0 6 3"><path d="M0 0h6L3 3z" fill="#bfe1f6"/></svg>
<div class="b" style="left:1284px;top:243px;width:93px;height:11px;background:#d4edbc;border-radius:5.500px;"></div>
<div class="t" style="left:1288.00px;top:244px;font-size:9.3px;line-height:10px;color:#11734b;letter-spacing:-0.266px;-webkit-text-stroke:0.150px #11734b;">Special Request</div>
<svg style="left:1366px;top:247.0px" width="6" height="3" viewBox="0 0 6 3"><path d="M0 0h6L3 3z" fill="#11734b"/></svg>
<div class="b" style="left:28px;top:258px;width:1354px;height:20px;background:#f6f8f9;"></div>
<div class="b" style="left:804px;top:258px;width:250px;height:20px;background:#b7e1cd;"></div>
<div class="b" style="left:1383px;top:278px;width:47px;height:1px;background:#e1e1e1;"></div>
<div class="t" style="left:582.30px;top:264px;font-size:9.5px;line-height:11px;color:#434343;letter-spacing:-0.338px;">03/26/2025</div>
<div class="b" style="left:690px;top:263px;width:108.6px;height:11px;background:#e6e6e6;border-radius:5.500px;"></div>
<div class="t" style="left:694.00px;top:264px;font-size:9.3px;line-height:10px;color:#3d3d3d;letter-spacing:-0.114px;-webkit-text-stroke:0.150px #3d3d3d;">Milk Chocolate</div>
<svg style="left:788.3px;top:267.0px" width="6" height="3" viewBox="0 0 6 3"><path d="M0 0h6L3 3z" fill="#3d3d3d"/></svg>
<div class="t" style="left:834.36px;top:264px;font-size:9.5px;line-height:11px;color:#434343;">5</div>
<div class="t" style="left:897.35px;top:264px;font-size:9.5px;line-height:11px;color:#434343;letter-spacing:-0.368px;">12.25</div>
<div class="t" style="left:987.55px;top:264px;font-size:9.5px;line-height:11px;color:#3c3c3c;font-weight:700;letter-spacing:0.432px;">61.25</div>
<div class="t" style="left:1080.25px;top:264px;font-size:9.5px;line-height:11px;color:#434343;letter-spacing:0.244px;">320005679</div>
<div class="b" style="left:1163px;top:263px;width:108.6px;height:11px;background:#11734b;border-radius:5.500px;"></div>
<div class="t" style="left:1167.00px;top:264px;font-size:9.3px;line-height:10px;color:#d4edbc;letter-spacing:-0.570px;-webkit-text-stroke:0.150px #d4edbc;">Cash</div>
<svg style="left:1261.5px;top:267.0px" width="6" height="3" viewBox="0 0 6 3"><path d="M0 0h6L3 3z" fill="#d4edbc"/></svg>
<div class="b" style="left:1284px;top:263px;width:93px;height:11px;background:#ffc8aa;border-radius:5.500px;"></div>
<div class="t" style="left:1288.00px;top:264px;font-size:9.3px;line-height:10px;color:#753800;letter-spacing:-0.120px;-webkit-text-stroke:0.150px #753800;">Discounts Applied</div>
<svg style="left:1366px;top:267.0px" width="6" height="3" viewBox="0 0 6 3"><path d="M0 0h6L3 3z" fill="#753800"/></svg>
<div class="b" style="left:28px;top:278px;width:1354px;height:20px;background:#fff;"></div>
<div class="b" style="left:804px;top:278px;width:250px;height:20px;background:#b7e1cd;"></div>
<div class="b" style="left:1383px;top:298px;width:47px;height:1px;background:#e1e1e1;"></div>
<div class="t" style="left:582.30px;top:284px;font-size:9.5px;line-height:11px;color:#434343;letter-spacing:-0.338px;">03/27/2025</div>
<div class="b" style="left:690px;top:283px;width:108.6px;height:11px;background:#753800;border-radius:5.500px;"></div>
<div class="t" style="left:694.00px;top:284px;font-size:9.3px;line-height:10px;color:#ffc8aa;letter-spacing:-0.335px;-webkit-text-stroke:0.150px #ffc8aa;">Cocoa Cubes</div>
<svg style="left:788.3px;top:287.0px" width="6" height="3" viewBox="0 0 6 3"><path d="M0 0h6L3 3z" fill="#ffc8aa"/></svg>
<div class="t" style="left:834.36px;top:284px;font-size:9.5px;line-height:11px;color:#434343;">2</div>
<div class="t" style="left:897.35px;top:284px;font-size:9.5px;line-height:11px;color:#434343;letter-spacing:-0.191px;">11.00</div>
<div class="t" style="left:987.55px;top:284px;font-size:9.5px;line-height:11px;color:#3c3c3c;font-weight:700;letter-spacing:0.432px;">22.00</div>
<div class="t" style="left:1080.25px;top:284px;font-size:9.5px;line-height:11px;color:#434343;letter-spacing:0.244px;">320005680</div>
<div class="b" style="left:1163px;top:283px;width:108.6px;height:11px;background:#11734b;border-radius:5.500px;"></div>
<div class="t" style="left:1167.00px;top:284px;font-size:9.3px;line-height:10px;color:#d4edbc;letter-spacing:-0.570px;-webkit-text-stroke:0.150px #d4edbc;">Cash</div>
<svg style="left:1261.5px;top:287.0px" width="6" height="3" viewBox="0 0 6 3"><path d="M0 0h6L3 3z" fill="#d4edbc"/></svg>
<div class="b" style="left:1284px;top:283px;width:93px;height:11px;background:#ffc8aa;border-radius:5.500px;"></div>
<div class="t" style="left:1288.00px;top:284px;font-size:9.3px;line-height:10px;color:#753800;letter-spacing:-0.120px;-webkit-text-stroke:0.150px #753800;">Discounts Applied</div>
<svg style="left:1366px;top:287.0px" width="6" height="3" viewBox="0 0 6 3"><path d="M0 0h6L3 3z" fill="#753800"/></svg>
<div class="b" style="left:28px;top:298px;width:1354px;height:20px;background:#f6f8f9;"></div>
<div class="b" style="left:804px;top:298px;width:250px;height:20px;background:#b7e1cd;"></div>
<div class="b" style="left:1383px;top:318px;width:47px;height:1px;background:#e1e1e1;"></div>
<div class="t" style="left:582.30px;top:304px;font-size:9.5px;line-height:11px;color:#434343;letter-spacing:-0.338px;">03/27/2025</div>
<div class="b" style="left:690px;top:303px;width:108.6px;height:11px;background:#753800;border-radius:5.500px;"></div>
<div class="t" style="left:694.00px;top:304px;font-size:9.3px;line-height:10px;color:#ffc8aa;letter-spacing:-0.335px;-webkit-text-stroke:0.150px #ffc8aa;">Cocoa Cubes</div>
<svg style="left:788.3px;top:307.0px" width="6" height="3" viewBox="0 0 6 3"><path d="M0 0h6L3 3z" fill="#ffc8aa"/></svg>
<div class="t" style="left:834.36px;top:304px;font-size:9.5px;line-height:11px;color:#434343;">3</div>
<div class="t" style="left:897.35px;top:304px;font-size:9.5px;line-height:11px;color:#434343;letter-spacing:-0.191px;">11.00</div>
<div class="t" style="left:987.55px;top:304px;font-size:9.5px;line-height:11px;color:#3c3c3c;font-weight:700;letter-spacing:0.432px;">33.00</div>
<div class="t" style="left:1080.25px;top:304px;font-size:9.5px;line-height:11px;color:#434343;letter-spacing:0.244px;">320005681</div>
<div class="b" style="left:1163px;top:303px;width:108.6px;height:11px;background:#11734b;border-radius:5.500px;"></div>
<div class="t" style="left:1167.00px;top:304px;font-size:9.3px;line-height:10px;color:#d4edbc;letter-spacing:-0.570px;-webkit-text-stroke:0.150px #d4edbc;">Cash</div>
<svg style="left:1261.5px;top:307.0px" width="6" height="3" viewBox="0 0 6 3"><path d="M0 0h6L3 3z" fill="#d4edbc"/></svg>
<div class="b" style="left:1284px;top:303px;width:93px;height:11px;background:#ffc8aa;border-radius:5.500px;"></div>
<div class="t" style="left:1288.00px;top:304px;font-size:9.3px;line-height:10px;color:#753800;letter-spacing:-0.120px;-webkit-text-stroke:0.150px #753800;">Discounts Applied</div>
<svg style="left:1366px;top:307.0px" width="6" height="3" viewBox="0 0 6 3"><path d="M0 0h6L3 3z" fill="#753800"/></svg>
<div class="b" style="left:28px;top:318px;width:1354px;height:20px;background:#fff;"></div>
<div class="b" style="left:804px;top:318px;width:250px;height:20px;background:#b7e1cd;"></div>
<div class="b" style="left:1383px;top:338px;width:47px;height:1px;background:#e1e1e1;"></div>
<div class="t" style="left:582.30px;top:324px;font-size:9.5px;line-height:11px;color:#434343;letter-spacing:-0.338px;">03/27/2025</div>
<div class="b" style="left:690px;top:323px;width:108.6px;height:11px;background:#753800;border-radius:5.500px;"></div>
<div class="t" style="left:694.00px;top:324px;font-size:9.3px;line-height:10px;color:#ffc8aa;letter-spacing:-0.335px;-webkit-text-stroke:0.150px #ffc8aa;">Cocoa Cubes</div>
<svg style="left:788.3px;top:327.0px" width="6" height="3" viewBox="0 0 6 3"><path d="M0 0h6L3 3z" fill="#ffc8aa"/></svg>
<div class="t" style="left:834.36px;top:324px;font-size:9.5px;line-height:11px;color:#434343;">1</div>
<div class="t" style="left:897.35px;top:324px;font-size:9.5px;line-height:11px;color:#434343;letter-spacing:-0.191px;">11.00</div>
<div class="t" style="left:987.55px;top:324px;font-size:9.5px;line-height:11px;color:#3c3c3c;font-weight:700;letter-spacing:0.563px;">11.00</div>
<div class="t" style="left:1080.25px;top:324px;font-size:9.5px;line-height:11px;color:#434343;letter-spacing:0.244px;">320005682</div>
<div class="b" style="left:1163px;top:323px;width:108.6px;height:11px;background:#0a53a8;border-radius:5.500px;"></div>
<div class="t" style="left:1167.00px;top:324px;font-size:9.3px;line-height:10px;color:#bfe1f6;letter-spacing:-0.255px;-webkit-text-stroke:0.150px #bfe1f6;">Credit Card</div>
<svg style="left:1261.5px;top:327.0px" width="6" height="3" viewBox="0 0 6 3"><path d="M0 0h6L3 3z" fill="#bfe1f6"/></svg>
<div class="b" style="left:1284px;top:323px;width:93px;height:11px;background:#d4edbc;border-radius:5.500px;"></div>
<div class="t" style="left:1288.00px;top:324px;font-size:9.3px;line-height:10px;color:#11734b;letter-spacing:-0.266px;-webkit-text-stroke:0.150px #11734b;">Special Request</div>
<svg style="left:1366px;top:327.0px" width="6" height="3" viewBox="0 0 6 3"><path d="M0 0h6L3 3z" fill="#11734b"/></svg>
<div class="b" style="left:28px;top:338px;width:1354px;height:20px;background:#f6f8f9;"></div>
<div class="b" style="left:804px;top:338px;width:250px;height:20px;background:#b7e1cd;"></div>
<div class="b" style="left:1383px;top:358px;width:47px;height:1px;background:#e1e1e1;"></div>
<div class="t" style="left:582.30px;top:344px;font-size:9.5px;line-height:11px;color:#434343;letter-spacing:-0.338px;">03/27/2025</div>
<div class="b" style="left:690px;top:343px;width:108.6px;height:11px;background:#3d3d3d;border-radius:5.500px;"></div>
<div class="t" style="left:694.00px;top:344px;font-size:9.3px;line-height:10px;color:#e8eaed;letter-spacing:-0.161px;-webkit-text-stroke:0.150px #e8eaed;">Dark Chocolate</div>
<svg style="left:788.3px;top:347.0px" width="6" height="3" viewBox="0 0 6 3"><path d="M0 0h6L3 3z" fill="#e8eaed"/></svg>
<div class="t" style="left:834.36px;top:344px;font-size:9.5px;line-height:11px;color:#434343;">4</div>
<div class="t" style="left:897.35px;top:344px;font-size:9.5px;line-height:11px;color:#434343;letter-spacing:-0.368px;">12.50</div>
<div class="t" style="left:987.55px;top:344px;font-size:9.5px;line-height:11px;color:#3c3c3c;font-weight:700;letter-spacing:0.432px;">50.00</div>
<div class="t" style="left:1080.25px;top:344px;font-size:9.5px;line-height:11px;color:#434343;letter-spacing:0.244px;">320005683</div>
<div class="b" style="left:1163px;top:343px;width:108.6px;height:11px;background:#0a53a8;border-radius:5.500px;"></div>
<div class="t" style="left:1167.00px;top:344px;font-size:9.3px;line-height:10px;color:#bfe1f6;letter-spacing:-0.255px;-webkit-text-stroke:0.150px #bfe1f6;">Credit Card</div>
<svg style="left:1261.5px;top:347.0px" width="6" height="3" viewBox="0 0 6 3"><path d="M0 0h6L3 3z" fill="#bfe1f6"/></svg>
<div class="b" style="left:1284px;top:343px;width:93px;height:11px;background:#ffc8aa;border-radius:5.500px;"></div>
<div class="t" style="left:1288.00px;top:344px;font-size:9.3px;line-height:10px;color:#753800;letter-spacing:-0.120px;-webkit-text-stroke:0.150px #753800;">Discounts Applied</div>
<svg style="left:1366px;top:347.0px" width="6" height="3" viewBox="0 0 6 3"><path d="M0 0h6L3 3z" fill="#753800"/></svg>
<div class="b" style="left:28px;top:358px;width:1354px;height:20px;background:#fff;"></div>
<div class="b" style="left:804px;top:358px;width:250px;height:20px;background:#b7e1cd;"></div>
<div class="b" style="left:1383px;top:378px;width:47px;height:1px;background:#e1e1e1;"></div>
<div class="t" style="left:582.30px;top:364px;font-size:9.5px;line-height:11px;color:#434343;letter-spacing:-0.338px;">03/27/2025</div>
<div class="b" style="left:690px;top:363px;width:108.6px;height:11px;background:#e6e6e6;border-radius:5.500px;"></div>
<div class="t" style="left:694.00px;top:364px;font-size:9.3px;line-height:10px;color:#3d3d3d;letter-spacing:-0.114px;-webkit-text-stroke:0.150px #3d3d3d;">Milk Chocolate</div>
<svg style="left:788.3px;top:367.0px" width="6" height="3" viewBox="0 0 6 3"><path d="M0 0h6L3 3z" fill="#3d3d3d"/></svg>
<div class="t" style="left:834.36px;top:364px;font-size:9.5px;line-height:11px;color:#434343;">1</div>
<div class="t" style="left:897.35px;top:364px;font-size:9.5px;line-height:11px;color:#434343;letter-spacing:-0.368px;">12.25</div>
<div class="t" style="left:987.55px;top:364px;font-size:9.5px;line-height:11px;color:#3c3c3c;font-weight:700;letter-spacing:0.432px;">12.25</div>
<div class="t" style="left:1080.25px;top:364px;font-size:9.5px;line-height:11px;color:#434343;letter-spacing:0.244px;">320005684</div>
<div class="b" style="left:1163px;top:363px;width:108.6px;height:11px;background:#11734b;border-radius:5.500px;"></div>
<div class="t" style="left:1167.00px;top:364px;font-size:9.3px;line-height:10px;color:#d4edbc;letter-spacing:-0.570px;-webkit-text-stroke:0.150px #d4edbc;">Cash</div>
<svg style="left:1261.5px;top:367.0px" width="6" height="3" viewBox="0 0 6 3"><path d="M0 0h6L3 3z" fill="#d4edbc"/></svg>
<div class="b" style="left:1284px;top:363px;width:93px;height:11px;background:#ffe5a0;border-radius:5.500px;"></div>
<div class="t" style="left:1288.00px;top:364px;font-size:9.3px;line-height:10px;color:#473821;letter-spacing:-0.333px;-webkit-text-stroke:0.150px #473821;">Refunded</div>
<svg style="left:1366px;top:367.0px" width="6" height="3" viewBox="0 0 6 3"><path d="M0 0h6L3 3z" fill="#473821"/></svg>
<div class="b" style="left:28px;top:378px;width:1354px;height:20px;background:#f6f8f9;"></div>
<div class="b" style="left:804px;top:378px;width:250px;height:20px;background:#b7e1cd;"></div>
<div class="b" style="left:1383px;top:398px;width:47px;height:1px;background:#e1e1e1;"></div>
<div class="t" style="left:582.30px;top:384px;font-size:9.5px;line-height:11px;color:#434343;letter-spacing:-0.338px;">03/28/2025</div>
<div class="b" style="left:690px;top:383px;width:108.6px;height:11px;background:#3d3d3d;border-radius:5.500px;"></div>
<div class="t" style="left:694.00px;top:384px;font-size:9.3px;line-height:10px;color:#e8eaed;letter-spacing:-0.161px;-webkit-text-stroke:0.150px #e8eaed;">Dark Chocolate</div>
<svg style="left:788.3px;top:387.0px" width="6" height="3" viewBox="0 0 6 3"><path d="M0 0h6L3 3z" fill="#e8eaed"/></svg>
<div class="t" style="left:834.36px;top:384px;font-size:9.5px;line-height:11px;color:#434343;">1</div>
<div class="t" style="left:897.35px;top:384px;font-size:9.5px;line-height:11px;color:#434343;letter-spacing:-0.368px;">12.50</div>
<div class="t" style="left:987.55px;top:384px;font-size:9.5px;line-height:11px;color:#3c3c3c;font-weight:700;letter-spacing:0.432px;">12.50</div>
<div class="t" style="left:1080.25px;top:384px;font-size:9.5px;line-height:11px;color:#434343;letter-spacing:0.244px;">320005685</div>
<div class="b" style="left:1163px;top:383px;width:108.6px;height:11px;background:#0a53a8;border-radius:5.500px;"></div>
<div class="t" style="left:1167.00px;top:384px;font-size:9.3px;line-height:10px;color:#bfe1f6;letter-spacing:-0.255px;-webkit-text-stroke:0.150px #bfe1f6;">Credit Card</div>
<svg style="left:1261.5px;top:387.0px" width="6" height="3" viewBox="0 0 6 3"><path d="M0 0h6L3 3z" fill="#bfe1f6"/></svg>
<div class="b" style="left:1284px;top:383px;width:93px;height:11px;background:#ffc8aa;border-radius:5.500px;"></div>
<div class="t" style="left:1288.00px;top:384px;font-size:9.3px;line-height:10px;color:#753800;letter-spacing:-0.120px;-webkit-text-stroke:0.150px #753800;">Discounts Applied</div>
<svg style="left:1366px;top:387.0px" width="6" height="3" viewBox="0 0 6 3"><path d="M0 0h6L3 3z" fill="#753800"/></svg>
<div class="b" style="left:28px;top:398px;width:1354px;height:20px;background:#fff;"></div>
<div class="b" style="left:804px;top:398px;width:250px;height:20px;background:#b7e1cd;"></div>
<div class="b" style="left:1383px;top:418px;width:47px;height:1px;background:#e1e1e1;"></div>
<div class="t" style="left:582.30px;top:404px;font-size:9.5px;line-height:11px;color:#434343;letter-spacing:-0.338px;">03/28/2025</div>
<div class="b" style="left:690px;top:403px;width:108.6px;height:11px;background:#753800;border-radius:5.500px;"></div>
<div class="t" style="left:694.00px;top:404px;font-size:9.3px;line-height:10px;color:#ffc8aa;letter-spacing:-0.335px;-webkit-text-stroke:0.150px #ffc8aa;">Cocoa Cubes</div>
<svg style="left:788.3px;top:407.0px" width="6" height="3" viewBox="0 0 6 3"><path d="M0 0h6L3 3z" fill="#ffc8aa"/></svg>
<div class="t" style="left:834.36px;top:404px;font-size:9.5px;line-height:11px;color:#434343;">2</div>
<div class="t" style="left:897.35px;top:404px;font-size:9.5px;line-height:11px;color:#434343;letter-spacing:-0.191px;">11.00</div>
<div class="t" style="left:987.55px;top:404px;font-size:9.5px;line-height:11px;color:#3c3c3c;font-weight:700;letter-spacing:0.432px;">22.00</div>
<div class="t" style="left:1080.25px;top:404px;font-size:9.5px;line-height:11px;color:#434343;letter-spacing:0.244px;">320005686</div>
<div class="b" style="left:1163px;top:403px;width:108.6px;height:11px;background:#0a53a8;border-radius:5.500px;"></div>
<div class="t" style="left:1167.00px;top:404px;font-size:9.3px;line-height:10px;color:#bfe1f6;letter-spacing:-0.255px;-webkit-text-stroke:0.150px #bfe1f6;">Credit Card</div>
<svg style="left:1261.5px;top:407.0px" width="6" height="3" viewBox="0 0 6 3"><path d="M0 0h6L3 3z" fill="#bfe1f6"/></svg>
<div class="b" style="left:1284px;top:403px;width:93px;height:11px;background:#ffc8aa;border-radius:5.500px;"></div>
<div class="t" style="left:1288.00px;top:404px;font-size:9.3px;line-height:10px;color:#753800;letter-spacing:-0.120px;-webkit-text-stroke:0.150px #753800;">Discounts Applied</div>
<svg style="left:1366px;top:407.0px" width="6" height="3" viewBox="0 0 6 3"><path d="M0 0h6L3 3z" fill="#753800"/></svg>
<div class="b" style="left:28px;top:418px;width:1354px;height:20px;background:#f6f8f9;"></div>
<div class="b" style="left:804px;top:418px;width:250px;height:20px;background:#b7e1cd;"></div>
<div class="b" style="left:1383px;top:438px;width:47px;height:1px;background:#e1e1e1;"></div>
<div class="t" style="left:582.30px;top:424px;font-size:9.5px;line-height:11px;color:#434343;letter-spacing:-0.338px;">03/28/2025</div>
<div class="b" style="left:690px;top:423px;width:108.6px;height:11px;background:#753800;border-radius:5.500px;"></div>
<div class="t" style="left:694.00px;top:424px;font-size:9.3px;line-height:10px;color:#ffc8aa;letter-spacing:-0.335px;-webkit-text-stroke:0.150px #ffc8aa;">Cocoa Cubes</div>
<svg style="left:788.3px;top:427.0px" width="6" height="3" viewBox="0 0 6 3"><path d="M0 0h6L3 3z" fill="#ffc8aa"/></svg>
<div class="t" style="left:834.36px;top:424px;font-size:9.5px;line-height:11px;color:#434343;">3</div>
<div class="t" style="left:897.35px;top:424px;font-size:9.5px;line-height:11px;color:#434343;letter-spacing:-0.191px;">11.00</div>
<div class="t" style="left:987.55px;top:424px;font-size:9.5px;line-height:11px;color:#3c3c3c;font-weight:700;letter-spacing:0.432px;">33.00</div>
<div class="t" style="left:1080.25px;top:424px;font-size:9.5px;line-height:11px;color:#434343;letter-spacing:0.244px;">320005687</div>
<div class="b" style="left:1163px;top:423px;width:108.6px;height:11px;background:#11734b;border-radius:5.500px;"></div>
<div class="t" style="left:1167.00px;top:424px;font-size:9.3px;line-height:10px;color:#d4edbc;letter-spacing:-0.570px;-webkit-text-stroke:0.150px #d4edbc;">Cash</div>
<svg style="left:1261.5px;top:427.0px" width="6" height="3" viewBox="0 0 6 3"><path d="M0 0h6L3 3z" fill="#d4edbc"/></svg>
<div class="b" style="left:1284px;top:423px;width:93px;height:11px;background:#ffc8aa;border-radius:5.500px;"></div>
<div class="t" style="left:1288.00px;top:424px;font-size:9.3px;line-height:10px;color:#753800;letter-spacing:-0.120px;-webkit-text-stroke:0.150px #753800;">Discounts Applied</div>
<svg style="left:1366px;top:427.0px" width="6" height="3" viewBox="0 0 6 3"><path d="M0 0h6L3 3z" fill="#753800"/></svg>
<div class="b" style="left:1429px;top:111px;width:1px;height:324px;background:#d9d9d9;"></div>
<div class="b" style="left:28px;top:159px;width:1px;height:276px;background:#bf837d;"></div>
<div class="b" style="left:28px;top:418px;width:134px;height:1px;background:#1a73e8;"></div>
<div class="b" style="left:160.2px;top:418px;width:1.7px;height:17px;background:#1a73e8;"></div>
<svg style="left:157px;top:159px" width="4.200" height="2.200" viewBox="0 0 4.200 2.200"><path d="M0 0H4.200V2.200Z" fill="#d8281c"/></svg>
<div class="b" style="left:32px;top:161px;width:540px;height:270.5px;background:#fff;border:5px solid #ed1c24;box-sizing:border-box;"></div>
<div class="t" style="left:221.05px;top:292px;font-size:17px;line-height:19px;color:#ed1c24;letter-spacing:0.006px;">Confidential Data</div>
</body></html>
